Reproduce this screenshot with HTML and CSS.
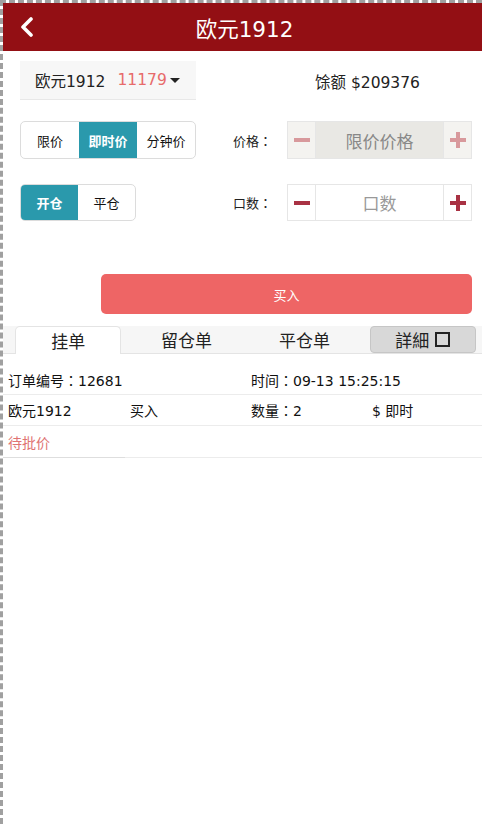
FILE: index.html
```html
<!DOCTYPE html>
<html lang="zh">
<head>
<meta charset="utf-8">
<title>欧元1912</title>
<link rel="stylesheet" href="styles.css">
</head>
<body>
<div class="page">
  <header class="topbar">
    <span class="back">
      <svg width="14" height="20" viewBox="0 0 14 20"><path d="M11 2 L3 10 L11 18" fill="none" stroke="#fff" stroke-width="3.6" stroke-linecap="round" stroke-linejoin="round"/></svg>
    </span>
    <h1 class="title">欧元1912</h1>
  </header>

  <section class="form">
    <div class="row row-top">
      <div class="symbol">
        <span class="sym-name">欧元1912</span>
        <span class="sym-price">11179</span>
        <span class="caret"></span>
      </div>
      <div class="balance">馀额 $209376</div>
    </div>

    <div class="row row-grid">
      <div class="seg seg3">
        <span class="seg-item">限价</span>
        <span class="seg-item active">即时价</span>
        <span class="seg-item">分钟价</span>
      </div>
      <label class="field-label">价格<span class="colon" lang="ja">：</span></label>
      <div class="stepper disabled">
        <span class="step-btn">
          <svg width="18" height="18" viewBox="0 0 18 18"><rect x="1" y="7" width="16" height="4" fill="currentColor"/></svg>
        </span>
        <span class="step-input">限价价格</span>
        <span class="step-btn">
          <svg width="18" height="18" viewBox="0 0 18 18"><rect x="1" y="7" width="16" height="4" fill="currentColor"/><rect x="7" y="1" width="4" height="16" fill="currentColor"/></svg>
        </span>
      </div>
    </div>

    <div class="row row-grid row-qty">
      <div class="seg seg2">
        <span class="seg-item active">开仓</span>
        <span class="seg-item">平仓</span>
      </div>
      <label class="field-label">口数<span class="colon" lang="ja">：</span></label>
      <div class="stepper">
        <span class="step-btn">
          <svg width="18" height="18" viewBox="0 0 18 18"><rect x="1" y="7" width="16" height="4" fill="currentColor"/></svg>
        </span>
        <span class="step-input light">口数</span>
        <span class="step-btn">
          <svg width="18" height="18" viewBox="0 0 18 18"><rect x="1" y="7" width="16" height="4" fill="currentColor"/><rect x="7" y="1" width="4" height="16" fill="currentColor"/></svg>
        </span>
      </div>
    </div>

    <div class="buy-row">
      <button class="buy">买入</button>
    </div>
  </section>

  <nav class="tabs">
    <span class="tab active">挂单</span>
    <span class="tab">留仓单</span>
    <span class="tab">平仓单</span>
    <span class="tab detail">詳細 <i class="box"></i></span>
  </nav>

  <section class="orders">
    <div class="orow">
      <span class="c2">订单编号<span class="colon" lang="ja">：</span>12681</span>
      <span class="c2">时间<span class="colon" lang="ja">：</span>09-13 15:25:15</span>
    </div>
    <div class="orow">
      <span>欧元1912</span>
      <span>买入</span>
      <span>数量<span class="colon" lang="ja">：</span>2</span>
      <span>$ 即时</span>
    </div>
    <div class="orow last">
      <span class="status">待批价</span>
    </div>
  </section>
</div>
</body>
</html>
```

FILE: styles.css
```css
* { box-sizing: border-box; }
html, body { margin: 0; padding: 0; background: #fff; }
body {
  font-family: "DejaVu Sans", "Noto Sans CJK SC", sans-serif;
  color: #222;
  width: 482px;
  min-height: 824px;
}
.colon { font-family: "Noto Sans CJK JP", sans-serif; }
.page {
  min-height: 824px;
  border-top: 3px dashed #a0a0a0;
  border-left: 3px dashed #a0a0a0;
}
.topbar {
  height: 48px;
  background: #930f14;
  display: flex;
  align-items: center;
  justify-content: center;
  position: relative;
}
.back {
  position: absolute;
  left: 17px;
  top: 14px;
  display: flex;
}
.title {
  margin: 0 0 0 4px;
  color: #fff;
  font-weight: normal;
  font-size: 21.5px;
}
.form { padding: 10px 0 0 17px; }
.row { display: flex; align-items: center; }
.row-top { height: 39px; }
.symbol {
  width: 176px;
  height: 39px;
  background: #f7f7f7;
  border-bottom: 1px solid #e8e8e8;
  display: flex;
  align-items: center;
  padding-left: 15px;
  font-size: 15.5px;
}
.sym-price { color: #e76b6b; margin-left: 12px; }
.caret {
  margin-left: 3px;
  width: 0; height: 0;
  border-left: 5px solid transparent;
  border-right: 5px solid transparent;
  border-top: 5px solid #222;
}
.balance {
  margin-left: 119px;
  font-size: 15.5px;
}
.row-grid {
  display: grid;
  grid-template-columns: 176px 91px 185px;
  align-items: center;
  margin-top: 21px;
}
.row-qty { margin-top: 25px; }
.seg {
  display: flex;
  height: 38px;
  border: 1px solid #dcdcdc;
  border-radius: 5px;
  overflow: hidden;
  font-size: 13px;
}
.seg2 { width: 116px; height: 37px; }
.seg-item {
  flex: 1;
  display: flex;
  align-items: center;
  justify-content: center;
  color: #111;
}
.seg-item.active {
  background: #2a99ac;
  color: #fff;
  font-weight: bold;
}
.field-label {
  font-size: 13px;
  padding-left: 37px;
  color: #222;
}
.stepper {
  display: flex;
  height: 38px;
  border: 1px solid #e6e6e6;
  color: #a93244;
}
.row-qty .stepper { height: 37px; }
.step-btn {
  width: 27px;
  display: flex;
  align-items: center;
  justify-content: center;
  background: #fff;
}
.stepper.disabled { color: #d8999c; }
.stepper.disabled .step-btn { background: #f4f3f0; }
.step-input {
  flex: 1;
  display: flex;
  align-items: center;
  justify-content: center;
  border-left: 1px solid #e6e6e6;
  border-right: 1px solid #e6e6e6;
  font-size: 17px;
  color: #888;
}
.stepper.disabled .step-input { background: #e9e8e4; }
.step-input.light { color: #999; }
.buy-row {
  display: flex;
  padding-left: 81px;
  margin-top: 53px;
}
.buy {
  width: 371px;
  height: 40px;
  border: none;
  border-radius: 5px;
  background: #ee6565;
  color: #fff;
  font-family: inherit;
  font-size: 13px;
  padding: 0;
}
.tabs {
  margin-top: 12px;
  height: 28px;
  background: #f6f6f6;
  border-bottom: 1px solid #e4e4e4;
  display: flex;
  padding-left: 6px;
}
.tab {
  width: 119px;
  display: flex;
  align-items: center;
  justify-content: center;
  font-size: 17px;
  color: #222;
}
.tab.active {
  margin: 0 6px;
  width: 107px;
  background: #fff;
  border: 1px solid #e4e4e4;
  border-bottom: none;
  border-radius: 5px 5px 0 0;
  height: 28px;
}
.tab.detail {
  margin: 0 6px;
  width: 107px;
  height: 27px;
  background: #d8d8d8;
  border: 1px solid #c6c6c6;
  border-radius: 4px;
}
.box {
  display: inline-block;
  width: 15px;
  height: 15px;
  border: 2px solid #222;
  margin-left: 6px;
}
.orders { margin-top: 11px; }
.orow {
  display: grid;
  grid-template-columns: 122px 121px 121px 112px;
  align-items: center;
  height: 30.5px;
  padding-left: 5px;
  border-bottom: 1px solid #ececec;
  font-size: 14px;
  color: #111;
}
.orow .c2 { grid-column: span 2; }
.orow:first-child { height: 30px; }
.orow.last {
  height: 32px;
  border-bottom: none;
  background: linear-gradient(to right, #dedede 122px, #ececec 122px) bottom / 100% 1px no-repeat;
}
.status { color: #e07373; }
```
